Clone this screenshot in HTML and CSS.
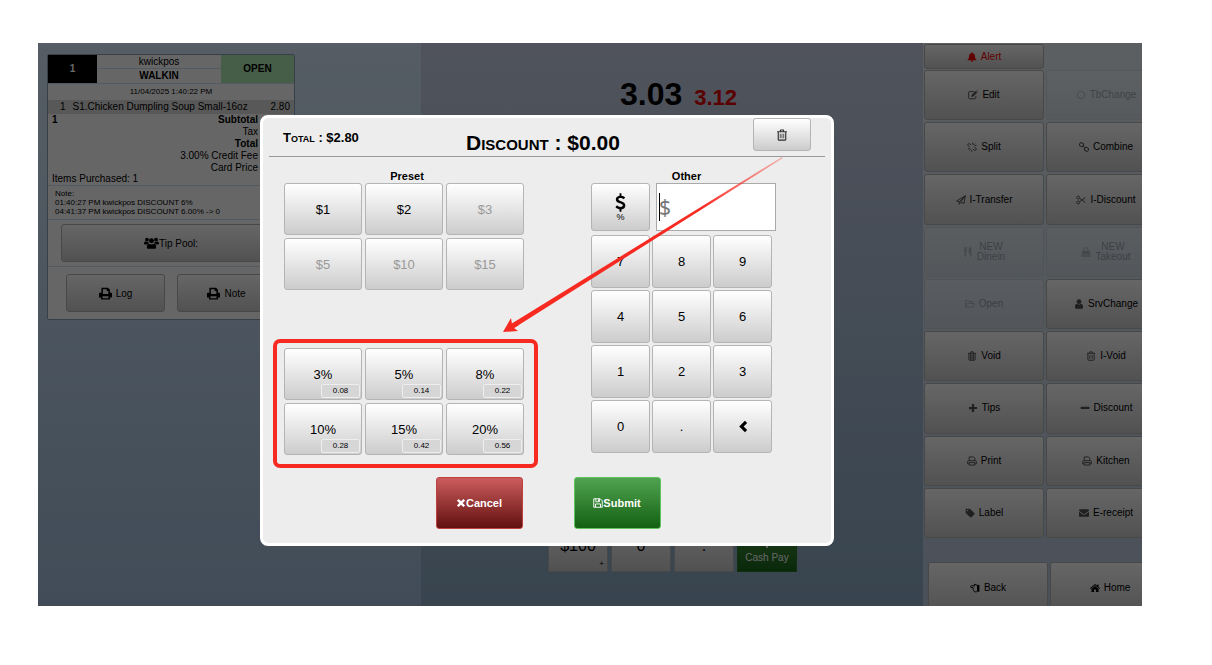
FILE: index.html
```html
<!DOCTYPE html>
<html lang="en">
<head>
  <meta charset="UTF-8">
  <meta name="viewport" content="width=device-width, initial-scale=1.0">
  <title>Discount</title>
  <link rel="stylesheet" href="styles.css">
</head>
<body>
  <!-- icon set -->
  <svg class="sprite" aria-hidden="true">
    <symbol id="i-bell" viewBox="0 0 16 16"><path d="M8 0.500a1 1 0 0 1 1 1v.4c2.400.5 3.700 2.300 3.700 4.600 0 3 .8 4.500 2.300 5.800v.7H1v-.7c1.500-1.300 2.300-2.800 2.300-5.800 0-2.300 1.300-4.100 3.700-4.600v-.4a1 1 0 0 1 1-1zM6 13.700h4a2 2 0 0 1-4 0z"/></symbol>
    <symbol id="i-edit" viewBox="0 0 16 16"><path class="line" d="M12.500 9.500v2.500a2 2 0 0 1-2 2h-7.500a2 2 0 0 1-2-2V4.500a2 2 0 0 1 2-2h7"/><path d="M5.500 8.300 12.300 1.500l2.400 2.400-6.800 6.800H5.500zM13 .8l.8-.6 2 2-.6.900z"/></symbol>
    <symbol id="i-circle" viewBox="0 0 16 16"><circle class="line" cx="8" cy="8" r="6"/></symbol>
    <symbol id="i-unlink" viewBox="0 0 16 16"><path class="line" d="M6.500 5 4.500 3A2 2 0 0 0 1.700 5.800l2.600 2.600M9.500 11l2 2a2 2 0 0 0 2.800-2.800L11.700 7.600M9 1v3M12.500 2.500l-2 2.300M15 5.500h-3M1.500 10.500h3M5.500 11.500l-2 2.300M7.500 12.500v3"/></symbol>
    <symbol id="i-link" viewBox="0 0 16 16"><rect class="line" x="1" y="1.500" width="6.500" height="5.500" rx="2" transform="rotate(35 4 4)"/><rect class="line" x="8.500" y="9" width="6.500" height="5.500" rx="2" transform="rotate(35 12 12)"/><path class="line" d="M6 6l4.500 4"/></symbol>
    <symbol id="i-plane" viewBox="0 0 16 16"><path class="line" d="M15 1 1 9.500l4 1.700L15 1l-2.200 12.500-5.300-2.200L15 1M5.200 11.300v3.700l2.300-3"/></symbol>
    <symbol id="i-cut" viewBox="0 0 16 16"><circle class="line" cx="3.500" cy="4" r="2.300"/><circle class="line" cx="3.500" cy="12" r="2.300"/><path class="line" d="M5.500 5 15 12M5.500 11 15 4"/></symbol>
    <symbol id="i-fork" viewBox="0 0 16 16"><path d="M1.500 0h1v4h.8V0h1v4h.8V0h1v5c0 1.200-.6 1.700-1.200 2v8.500H2.700V7C2 6.700 1.500 6.200 1.500 5zM13.500 0v15.500h-2.300V10H9V4c0-2.500 1.500-4 4.500-4z"/></symbol>
    <symbol id="i-bag" viewBox="0 0 16 16"><path d="M2 6h12l1.500 6H.5zM.4 13h15.200l.2 2.500H.2z"/><path class="line" d="M5 8V4a3 3 0 0 1 6 0v4"/></symbol>
    <symbol id="i-folder" viewBox="0 0 16 16"><path class="line" d="M1 12.500V3.500a1 1 0 0 1 1-1h3l1.500 1.500H11a1 1 0 0 1 1 1v2M1 12.500 4 7h11.500l-3 6H1.500z"/></symbol>
    <symbol id="i-user" viewBox="0 0 16 16"><circle cx="8" cy="4.200" r="3.800"/><path d="M4.500 7.500c2 1.600 5 1.600 7 0 2 .4 3 2.500 3 5.500 0 1.700-1 2.500-2.500 2.500H4C2.500 15.500 1.500 14.700 1.500 13c0-3 1-5.100 3-5.500z"/></symbol>
    <symbol id="i-trash" viewBox="0 0 16 16"><path class="line" d="M1.500 3.700h13M5.500 3.500 6.200 1.300h3.600l.7 2.200M3 4v9.500a1.300 1.300 0 0 0 1.300 1.300h7.400A1.300 1.300 0 0 0 13 13.500V4"/><path class="thin" d="M5.700 6.300v6M8 6.300v6M10.300 6.300v6"/></symbol>
    <symbol id="i-trash-full" viewBox="0 0 16 16"><path class="line" d="M1.500 3.700h13M5.500 3.500 6.200 1.300h3.600l.7 2.200M3 4v9.500a1.300 1.300 0 0 0 1.300 1.300h7.400A1.300 1.300 0 0 0 13 13.500V4"/><path class="line" d="M5.500 5v9M8 5v9M10.500 5v9"/></symbol>
    <symbol id="i-plus" viewBox="0 0 16 16"><path d="M6.200 1.500h3.600v4.700h4.700v3.600H9.800v4.700H6.200V9.800H1.500V6.200h4.700z"/></symbol>
    <symbol id="i-minus" viewBox="0 0 16 16"><rect x="1" y="6" width="14" height="3.600" rx="1"/></symbol>
    <symbol id="i-print" viewBox="0 0 16 16"><path class="line" d="M3.500 8V1.500h7l2 2V8M3.500 12.500H1V9a1.500 1.500 0 0 1 1.500-1.500h11A1.500 1.500 0 0 1 15 9v3.500h-2.500M3.500 10.500h9v4h-9z"/></symbol>
    <symbol id="i-print-bold" viewBox="0 0 16 16"><path d="M3 1h8l2.500 2.500V7H15a1 1 0 0 1 1 1v5h-2.500v2.500h-11V13H0V8a1 1 0 0 1 1-1h2zm1.800 1.800V8.500h6.700V5H9.500V2.800zM4.300 11.300v2.400h7.400v-2.400z" fill-rule="evenodd"/></symbol>
    <symbol id="i-tag" viewBox="0 0 16 16"><path fill-rule="evenodd" d="M1 2.200A1.200 1.200 0 0 1 2.200 1h4.600c.6 0 1.400.4 1.900.8l6.400 6.400c.5.500.5 1.200 0 1.700l-5 5c-.5.500-1.200.5-1.700 0L1.900 8.600C1.400 8.200 1 7.300 1 6.700zM4 2.700a1.300 1.300 0 1 0 0 2.600 1.300 1.300 0 0 0 0-2.600z"/></symbol>
    <symbol id="i-mail" viewBox="0 0 16 16"><path d="M0 3.300C0 2.500.6 2 1.400 2h13.200c.8 0 1.400.5 1.400 1.300 0 .9-.7 1.700-1.400 2.200L9.300 9.200c-.8.600-1.800.6-2.600 0L1.400 5.500C.8 5 0 4 0 3.300zM0 6l6 4.300c1.200.9 2.800.9 4 0L16 6v6.600c0 .8-.6 1.400-1.400 1.400H1.400C.6 14 0 13.400 0 12.600z"/></symbol>
    <symbol id="i-hand" viewBox="0 0 16 16"><path class="line" d="M12 3.500 9 3 8 1.500 6.800 2.500 7.500 4.500H2.300a1.400 1.400 0 0 0 0 2.800H5v1.500c-.8 1 0 2 .7 2-.2 1.200.3 1.700 1 1.900 0 1 .6 1.500 1.500 1.500H10l2-1z"/><path d="M12.500 3H15v11h-2.500z"/></symbol>
    <symbol id="i-home" viewBox="0 0 16 16"><path d="M8 1.500 11.500 4.500V2.500h2v3.800L16 8.500l-.9 1L8 3.600.9 9.500 0 8.500zM8 4.800l5.700 4.700v5H9.500v-4h-3v4H2.300v-5z"/></symbol>
    <symbol id="i-group" viewBox="0 0 20 16"><circle cx="4" cy="3.500" r="2.500"/><circle cx="16" cy="3.500" r="2.500"/><circle cx="10" cy="5" r="3.300"/><path d="M2 6c1 .8 2.500.9 3.700.3C6 7.300 6 8 6.500 8.500 5 8.500 4 9 3.500 10H2C.8 10 0 9.500 0 8.500S.6 6.500 2 6zM18 6c-1 .8-2.500.9-3.700.3-.3 1-.3 1.700-.8 2.200 1.500 0 2.500.5 3 1.500H18c1.200 0 2-.5 2-1.500s-.6-2-2-2.500zM6.500 9c2 1.300 5 1.300 7 0 2 .2 2.700 2 2.700 4.500 0 1.500-.9 2.200-2.200 2.200H6c-1.300 0-2.200-.7-2.200-2.200C3.800 11 4.500 9.200 6.500 9z"/></symbol>
    <symbol id="i-times" viewBox="0 0 16 16"><path d="M4.200 1.500 8 5.300l3.800-3.800 2.700 2.700L10.700 8l3.800 3.800-2.700 2.700L8 10.700l-3.800 3.800-2.700-2.700L5.300 8 1.500 4.200z"/></symbol>
    <symbol id="i-save" viewBox="0 0 16 16"><path class="line" d="M1.200 1.200h10.300l3.300 3.300v10.300H1.200zM4 14.500V9.500h8v5M4.500 1.500V6h6V1.500"/><path d="M8 2h1.700v3H8z"/></symbol>
    <symbol id="i-left" viewBox="0 0 16 16"><path d="M11 1l2.700 2.700L9.400 8l4.300 4.300L11 15 4 8z"/></symbol>
    <symbol id="i-dollar" viewBox="0 0 12 20"><path d="M5 0h2v2.500c1.700.2 3 .8 4 1.700L9.700 6.500C8.600 5.600 7.400 5 6 5c-1.400 0-2.300.6-2.300 1.500 0 1 .9 1.500 3 2.200C9.400 9.600 11.300 10.700 11.300 13.200c0 2.300-1.600 3.900-4.300 4.300V20H5v-2.500c-1.800-.2-3.400-1-4.500-2.200L2.200 13c1.200 1.200 2.400 1.800 3.900 1.800 1.500 0 2.400-.6 2.400-1.600 0-1.100-1-1.600-3.200-2.400C2.700 9.900.9 8.900.9 6.600.9 4.400 2.500 2.900 5 2.500z"/></symbol>
  </svg>

  <div class="screen">
    <main class="pos">
      <section class="orders">
        <article class="ticket">
          <header class="ticket-head">
            <div class="ticket-no">1</div>
            <div class="ticket-who">
              <span>kwickpos</span>
              <strong>WALKIN</strong>
            </div>
            <div class="ticket-status">OPEN</div>
          </header>
          <p class="ticket-date">11/04/2025 1:40:22 PM</p>
          <div class="ticket-item">
            <span>1</span>
            <span class="name">S1.Chicken Dumpling Soup Small-16oz</span>
            <span>2.80</span>
          </div>
          <div class="ticket-sums">
            <strong>1</strong>
            <ul>
              <li><strong>Subtotal</strong></li>
              <li>Tax</li>
              <li><strong>Total</strong></li>
              <li>3.00% Credit Fee</li>
              <li>Card Price</li>
            </ul>
          </div>
          <p class="ticket-count">Items Purchased: 1</p>
          <div class="ticket-note">
            Note:<br>
            01:40:27 PM kwickpos DISCOUNT 6%<br>
            04:41:37 PM kwickpos DISCOUNT 6.00% -&gt; 0
          </div>
          <div class="ticket-tip">
            <button type="button" class="btn"><svg class="icon wide"><use href="#i-group"/></svg>Tip Pool:</button>
          </div>
          <div class="ticket-tools">
            <button type="button" class="btn"><svg class="icon"><use href="#i-print-bold"/></svg> Log</button>
            <button type="button" class="btn"><svg class="icon"><use href="#i-print-bold"/></svg> Note</button>
          </div>
        </article>
      </section>

      <section class="pay">
        <p class="amount">3.03 <span>3.12</span></p>
        <div class="pay-keys">
          <button type="button" class="btn">$100<small>+</small></button>
          <button type="button" class="btn">0</button>
          <button type="button" class="btn">.</button>
          <button type="button" class="btn cash"><svg class="icon"><use href="#i-dollar"/></svg>Cash Pay</button>
        </div>
      </section>

      <nav class="side">
        <button type="button" class="btn alert"><svg class="icon"><use href="#i-bell"/></svg>Alert</button>
        <div class="side-grid">
          <button type="button" class="btn"><svg class="icon"><use href="#i-edit"/></svg>Edit</button>
          <button type="button" class="btn" disabled><svg class="icon"><use href="#i-circle"/></svg>TbChange</button>
          <button type="button" class="btn"><svg class="icon"><use href="#i-unlink"/></svg>Split</button>
          <button type="button" class="btn"><svg class="icon"><use href="#i-link"/></svg>Combine</button>
          <button type="button" class="btn"><svg class="icon"><use href="#i-plane"/></svg>I-Transfer</button>
          <button type="button" class="btn"><svg class="icon"><use href="#i-cut"/></svg>I-Discount</button>
          <button type="button" class="btn" disabled><svg class="icon"><use href="#i-fork"/></svg><span>NEW<br>Dinein</span></button>
          <button type="button" class="btn" disabled><svg class="icon"><use href="#i-bag"/></svg><span>NEW<br>Takeout</span></button>
          <button type="button" class="btn" disabled><svg class="icon"><use href="#i-folder"/></svg>Open</button>
          <button type="button" class="btn"><svg class="icon"><use href="#i-user"/></svg>SrvChange</button>
          <button type="button" class="btn"><svg class="icon"><use href="#i-trash-full"/></svg>Void</button>
          <button type="button" class="btn"><svg class="icon"><use href="#i-trash"/></svg>I-Void</button>
          <button type="button" class="btn"><svg class="icon"><use href="#i-plus"/></svg>Tips</button>
          <button type="button" class="btn"><svg class="icon"><use href="#i-minus"/></svg>Discount</button>
          <button type="button" class="btn"><svg class="icon"><use href="#i-print"/></svg>Print</button>
          <button type="button" class="btn"><svg class="icon"><use href="#i-print"/></svg>Kitchen</button>
          <button type="button" class="btn"><svg class="icon"><use href="#i-tag"/></svg>Label</button>
          <button type="button" class="btn"><svg class="icon"><use href="#i-mail"/></svg>E-receipt</button>
        </div>
        <div class="side-foot">
          <button type="button" class="btn"><svg class="icon"><use href="#i-hand"/></svg>Back</button>
          <button type="button" class="btn"><svg class="icon"><use href="#i-home"/></svg>Home</button>
        </div>
      </nav>
    </main>

    <div class="overlay">
      <form class="modal">
        <header class="modal-head">
          <span class="total">Total : $2.80</span>
          <h1>Discount : $0.00</h1>
          <button type="button" class="btn clear" aria-label="Clear discount"><svg class="icon"><use href="#i-trash"/></svg></button>
        </header>

        <div class="modal-body">
          <section class="preset">
            <h2>Preset</h2>
            <div class="preset-grid">
              <button type="button" class="btn">$1</button>
              <button type="button" class="btn">$2</button>
              <button type="button" class="btn" disabled>$3</button>
              <button type="button" class="btn" disabled>$5</button>
              <button type="button" class="btn" disabled>$10</button>
              <button type="button" class="btn" disabled>$15</button>
            </div>
            <div class="highlight">
              <div class="preset-grid">
                <button type="button" class="btn">3%<small>0.08</small></button>
                <button type="button" class="btn">5%<small>0.14</small></button>
                <button type="button" class="btn">8%<small>0.22</small></button>
                <button type="button" class="btn">10%<small>0.28</small></button>
                <button type="button" class="btn">15%<small>0.42</small></button>
                <button type="button" class="btn">20%<small>0.56</small></button>
              </div>
            </div>
          </section>

          <section class="other">
            <h2><label for="other">Other</label></h2>
            <div class="other-row">
              <button type="button" class="btn unit" aria-label="Switch unit"><svg class="icon"><use href="#i-dollar"/></svg><small>%</small></button>
              <div class="field">
                <input type="text" id="other" placeholder="$">
                <span class="caret"></span>
              </div>
            </div>
            <div class="keypad">
              <button type="button" class="btn">7</button>
              <button type="button" class="btn">8</button>
              <button type="button" class="btn">9</button>
              <button type="button" class="btn">4</button>
              <button type="button" class="btn">5</button>
              <button type="button" class="btn">6</button>
              <button type="button" class="btn">1</button>
              <button type="button" class="btn">2</button>
              <button type="button" class="btn">3</button>
              <button type="button" class="btn">0</button>
              <button type="button" class="btn">.</button>
              <button type="button" class="btn" aria-label="Backspace"><svg class="icon"><use href="#i-left"/></svg></button>
            </div>
          </section>
        </div>

        <footer class="modal-foot">
          <button type="button" class="btn cancel"><svg class="icon"><use href="#i-times"/></svg>Cancel</button>
          <button type="submit" class="btn submit"><svg class="icon"><use href="#i-save"/></svg>Submit</button>
        </footer>

        <!-- arrow pointing at the percent presets -->
        <svg class="arrow" viewBox="0 0 280 176" aria-hidden="true">
          <defs>
            <linearGradient id="fade" x1="1" y1="0" x2="0" y2="1">
              <stop offset="0" stop-color="#f72a22" stop-opacity="0.3"/>
              <stop offset="0.3" stop-color="#f72a22" stop-opacity="1"/>
            </linearGradient>
          </defs>
          <path fill="url(#fade)" d="M279 0 280 1 11 171 8 167z"/>
          <path fill="#f72a22" d="M0 175 8 161 9 167 14 164 16 168 11 171 15 174z"/>
        </svg>
      </form>
    </div>
  </div>
</body>
</html>
```

FILE: styles.css
```css
* {
  margin: 0;
  padding: 0;
  box-sizing: border-box;
}

body {
  font-family: "Liberation Sans", Arial, Helvetica, sans-serif;
  font-size: 10px;
  color: #000;
  background: #fff;
  height: 100vh;
  padding: 43px 70px 59px 38px;
}

.sprite {
  display: none;
}

.screen {
  position: relative;
  height: 100%;
  overflow: hidden;
}

.pos {
  display: grid;
  grid-template-columns: 383px 1fr 219px;
  height: 100%;
}

/* Buttons and icons */
.btn {
  position: relative;
  display: flex;
  align-items: center;
  justify-content: center;
  gap: 4px;
  font: inherit;
  color: #000;
  background: linear-gradient(#fff, #ccc);
  border: 1px solid #b4b4b4;
  border-radius: 3px;
  cursor: pointer;
}

.icon {
  width: 10px;
  height: 10px;
  flex: none;
  fill: currentColor;
}

.icon.wide {
  width: 15px;
  height: 14px;
}

.line,
.thin {
  fill: none;
  stroke: currentColor;
  stroke-width: 1.5;
}

.thin {
  stroke-width: 1;
}

/* Ticket */
.orders {
  background: linear-gradient(#d6e8fa, #a2bedc);
  padding: 11px 126px 0 9px;
}

.ticket {
  background: #fff;
  border: 1px solid #8a9fb5;
  border-radius: 2px;
}

.ticket-head {
  display: grid;
  grid-template-columns: 49px 1fr 73px;
  height: 28px;
  text-align: center;
  font-weight: bold;
  line-height: 28px;
}

.ticket-no {
  color: #fff;
  background: #000;
}

.ticket-who {
  line-height: 14px;
}

.ticket-who span {
  font-weight: normal;
  border-bottom: 1px solid #cfe0f5;
}

.ticket-who span,
.ticket-who strong {
  display: block;
  height: 14px;
}

.ticket-status {
  background: #aee8b4;
}

.ticket-date {
  border-top: 1px solid #cfe0f5;
  font-size: 8px;
  line-height: 16px;
  text-align: center;
}

.ticket-item {
  display: flex;
  gap: 7px;
  padding: 0 4px 0 12px;
  line-height: 14px;
  background: #dcdcdc;
}

.ticket-item .name {
  flex: 1;
}

.ticket-sums {
  display: flex;
  justify-content: space-between;
  padding: 0 36px 0 4px;
  line-height: 12px;
}

.ticket-sums ul {
  list-style: none;
  text-align: right;
}

.ticket-count {
  padding: 0 4px;
  line-height: 10px;
}

.ticket-note {
  margin-top: 1px;
  padding: 3px 7px;
  border-top: 1px solid #cfe0f5;
  font-size: 8px;
  line-height: 9px;
}

.ticket-tip {
  padding: 4px 13px;
  border-top: 1px solid #cfe0f5;
}

.ticket-tip .btn {
  gap: 0;
  width: 100%;
  height: 38px;
}

.ticket-tools {
  display: grid;
  grid-template-columns: 1fr 1fr;
  gap: 12px;
  padding: 7px 18px;
  border-top: 1px solid #cfe0f5;
}

.ticket-tools .btn {
  height: 38px;
}

.ticket-tools .icon {
  width: 13px;
  height: 13px;
}

/* Payment */
.pay {
  display: flex;
  flex-direction: column;
  justify-content: space-between;
  background: linear-gradient(#c8d0e6, #8caac4);
  padding: 32px 126px 34px 127px;
}

.amount {
  font-size: 32px;
  font-weight: bold;
  line-height: 38px;
  padding-left: 72px;
}

.amount span {
  font-size: 22px;
  margin-left: 3px;
  color: #e00000;
}

.pay-keys {
  display: grid;
  grid-template-columns: repeat(4, 1fr);
  gap: 3px;
}

.pay-keys .btn {
  height: 52px;
  font-size: 16px;
  border-radius: 0;
}

.pay-keys small {
  position: absolute;
  right: 3px;
  bottom: 3px;
  font-size: 8px;
}

.pay-keys .cash {
  flex-direction: column;
  font-size: 10px;
  color: #fff;
  background: linear-gradient(#4ca04c, #1a661a);
  border-color: #2a7a2a;
}

.cash .icon {
  width: 12px;
  height: 18px;
}

/* Right menu */
.side {
  display: flex;
  flex-direction: column;
  background: linear-gradient(#e4eef4, #bccade);
  padding: 1px 0 0 1px;
  line-height: 10px;
}

.side .icon {
  opacity: 0.65;
}

.side .alert {
  width: 120px;
  height: 25px;
  color: #f00000;
}

.side .alert .icon {
  opacity: 1;
}

.side-grid {
  flex: 1;
  display: grid;
  grid-template-columns: 120px 120px;
  grid-auto-rows: 1fr;
  gap: 2px;
  margin-top: 1px;
}

.side .btn:disabled {
  color: #000;
  opacity: 0.3;
}

.side-foot {
  display: grid;
  grid-template-columns: 120px 120px;
  gap: 2px;
  height: 44px;
  margin: 24px 0 0 4px;
}

.side-foot .btn {
  height: 52px;
}

.side-foot .icon {
  opacity: 1;
}

/* Discount dialog */
.overlay {
  position: absolute;
  inset: 0;
  padding: 72px 0 0 222px;
  background: rgba(0, 0, 0, 0.6);
}

.modal {
  position: relative;
  width: 574px;
  background: #ededed;
  border: 3px solid #fff;
  border-radius: 8px;
  padding: 0 6px 14px;
}

.modal-head {
  display: flex;
  align-items: flex-start;
  height: 39px;
  padding: 0 14px;
  border-bottom: 1px solid #999;
  font-variant: small-caps;
  font-weight: bold;
}

.total {
  width: 183px;
  font-size: 13px;
  line-height: 40px;
}

.modal-head h1 {
  flex: 1;
  font-size: 21px;
  line-height: 50px;
}

.clear {
  width: 58px;
  height: 33px;
}

.clear .icon {
  width: 12px;
  height: 12px;
  opacity: 0.8;
}

.modal-body {
  display: flex;
  justify-content: space-between;
  padding: 12px 49px 0 15px;
}

.modal-body .btn {
  font-size: 13px;
}

.modal h2 {
  font-size: 11px;
  line-height: 14px;
  text-align: center;
  padding-left: 6px;
}

.preset {
  width: 240px;
}

.preset-grid {
  display: grid;
  grid-template-columns: repeat(3, 1fr);
  grid-auto-rows: 52px;
  gap: 3px;
}

.preset .btn:disabled {
  color: #999;
}

.preset small {
  position: absolute;
  right: 1px;
  bottom: 1px;
  width: 39px;
  border: 1px solid #eee;
  border-radius: 2px;
  background: #d6d6d6;
  font-size: 8px;
  line-height: 12px;
}

.highlight {
  margin: 49px -14px 0 -11px;
  padding: 5px 10px 9px 7px;
  border: 4px solid #f72a22;
  border-radius: 7px;
}

.other {
  width: 185px;
}

.other-row {
  display: flex;
  gap: 6px;
}

.unit {
  flex-direction: column;
  gap: 0;
  width: 59px;
  height: 48px;
}

.unit .icon {
  width: 11px;
  height: 19px;
}

.unit small {
  font-size: 9px;
}

.field {
  position: relative;
  flex: 1;
}

.field input {
  width: 100%;
  height: 48px;
  padding: 0 2px;
  border: 1px solid #aaa;
  background: #fff;
  font-family: "Noto Sans", sans-serif;
  font-size: 21px;
}

.field input::placeholder {
  color: #777;
}

.caret {
  position: absolute;
  left: 3px;
  top: 10px;
  width: 1px;
  height: 28px;
  background: #000;
}

.keypad {
  display: grid;
  grid-template-columns: repeat(3, 59px);
  grid-auto-rows: 53px;
  gap: 2px;
  margin-top: 4px;
}

.keypad .icon {
  width: 13px;
  height: 13px;
}

.modal-foot {
  display: flex;
  justify-content: center;
  gap: 51px;
  margin-top: 9px;
  padding-left: 2px;
}

.modal-foot .btn {
  gap: 0;
  width: 87px;
  height: 52px;
  font-size: 11px;
  font-weight: bold;
  color: #fff;
  border-radius: 3px;
}

.modal-foot .cancel {
  background: linear-gradient(#cc5c5c, #621010);
  border-color: #c04040;
}

.modal-foot .submit {
  background: linear-gradient(#50a350, #136013);
  border-color: #5fc45f;
}

.arrow {
  position: absolute;
  left: 240px;
  top: 39px;
  width: 280px;
  height: 176px;
  pointer-events: none;
}
```
